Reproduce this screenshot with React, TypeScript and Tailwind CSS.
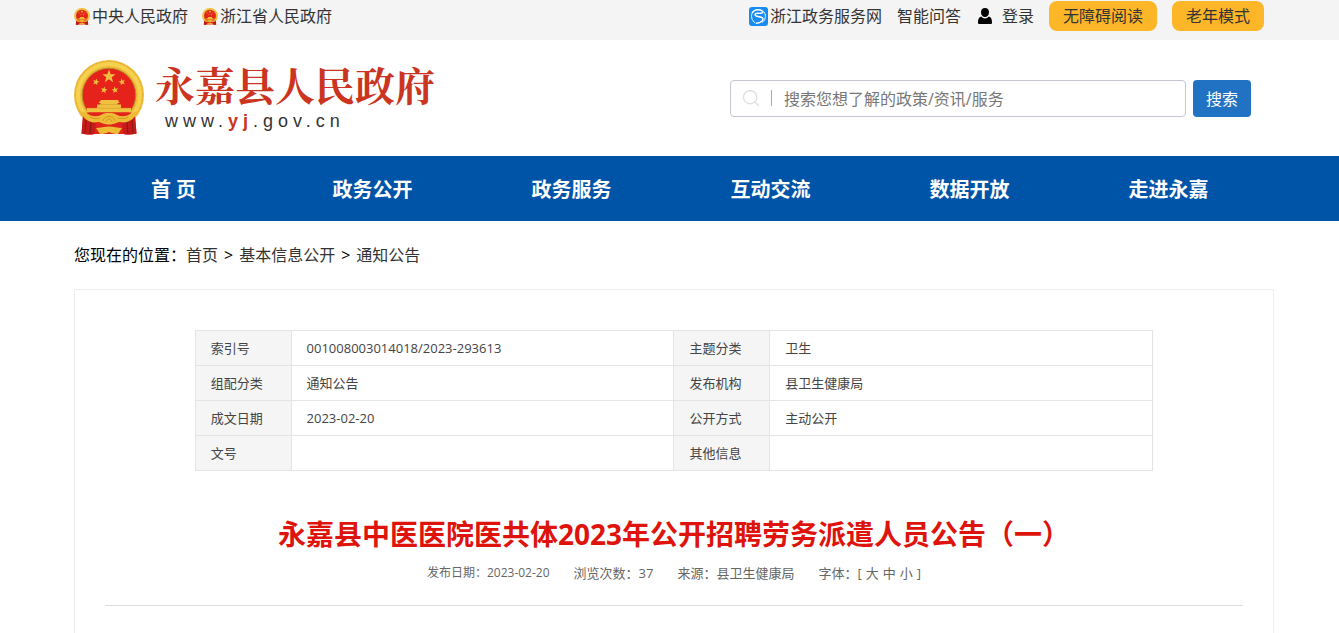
import { Search } from "lucide-react";

const navItems = ["首 页", "政务公开", "政务服务", "互动交流", "数据开放", "走进永嘉"];

const infoRows = [
  ["索引号", "001008003014018/2023-293613", "主题分类", "卫生"],
  ["组配分类", "通知公告", "发布机构", "县卫生健康局"],
  ["成文日期", "2023-02-20", "公开方式", "主动公开"],
  ["文号", "", "其他信息", ""],
];

const STAR = "M0,-10 L2.4,-3.2 L9.5,-3.1 L3.8,1.2 L5.9,8.1 L0,4 L-5.9,8.1 L-3.8,1.2 L-9.5,-3.1 L-2.4,-3.2 Z";

function Emblem({ className }: { className: string }) {
  return (
    <svg viewBox="0 0 70 76" className={className} aria-hidden="true">
      <circle cx="35" cy="35" r="35" fill="#eebb36" />
      <circle cx="35" cy="35" r="31" fill="none" stroke="#f6d150" strokeWidth="4" />
      <circle cx="35" cy="35" r="33.500" fill="none" stroke="#dfa52c" strokeWidth="0.600" strokeDasharray="2 2" />
      <circle cx="35" cy="35" r="26.800" fill="#e5231b" stroke="#b98a2c" strokeWidth="1" />
      <g fill="#f0c040">
        <path d={STAR} transform="translate(35 16.500) scale(0.7)" />
        <path d={STAR} transform="translate(22 22) rotate(15) scale(0.36)" />
        <path d={STAR} transform="translate(48 22) rotate(-15) scale(0.36)" />
        <path d={STAR} transform="translate(30 30) rotate(10) scale(0.36)" />
        <path d={STAR} transform="translate(41 30) rotate(-10) scale(0.36)" />
        <path d="M27 40h17l1.500 3h-2v1.500H47V48h10v4.500H13V48h10v-3.500h3.500V43h-2z" />
      </g>
      <path d="M25.500 44.500h19M14 48.300h42" stroke="#d69c28" strokeWidth="0.600" />
      {/* drapery and ribbon */}
      <path d="M13 52.500h44l4 4 1.500 17c-4 1-9 1.500-13 .5H20.500c-4 1-9 .5-13-.5l1.500-17z" fill="#e0241d" />
      <path d="M9 56l-1.500 17.500c4 1 9 1.500 13 .5L22 62zM61 56l1.500 17.500c-4 1-9 1.500-13 .5L48 62z" fill="#c41c1a" />
      <path d="M12 60l-1 13M17 62l-1 12M58 60l1 13M53 62l1 12" stroke="#8f1515" strokeWidth="1" />
      <path d="M6 51l6 1.500c5 4 10 5 15 2.500 2-1.500 4-2 8-2s6 .5 8 2c5 2.500 10 1.500 15-2.500l6-1.500c-3 8-10 13-18 11-3 0-5 2.500-11 2.500S27 62 24 62C16 64 9 59 6 51z" fill="#eebb36" />
      <path d="M22 68c5 0 8-1.500 13-1.500S43 68 48 68l-4 6c-3 0-6-.5-9-2-3 1.500-6 2-9 2z" fill="#eebb36" />
      <path d="M29 61c1-6 11-6 12 0M32 62c1-4 5-4 6 0M16 57c3 2 7 2 10 1M54 57c-3 2-7 2-10 1" fill="none" stroke="#cf8d19" strokeWidth="0.800" />
    </svg>
  );
}

function ServiceLogo() {
  return (
    <svg viewBox="0 0 19 19" className="h-[19px] w-[19px]" aria-hidden="true">
      <rect width="19" height="19" rx="3" fill="#168cf2" />
      <g fill="none" stroke="#fff" strokeLinecap="round">
        <path d="M3.400 5.500C1.600 9 2.500 13.500 6 15.800" strokeWidth="0.900" />
        <path d="M3.400 5.500C5.500 2.500 10 1.800 13.500 4c1.800 1.600-1.500 2.600-4 2.300C6.500 6 5.500 7.200 6.500 8.500c1.500 1.800 5.500.8 7 2.500 1.600 2-1.500 4.800-6 5.200" strokeWidth="1.400" />
        <path d="M15.500 5.500c1.800 3.500 1 7.500-2 9.800" strokeWidth="0.900" />
      </g>
    </svg>
  );
}

function TopBar() {
  return (
    <div className="h-10 bg-[#f4f4f4] pl-[9px]">
      <div className="mx-auto flex max-w-[1200px] items-center justify-between pt-px pr-[10px] leading-[30px] text-[#333]">
        <div className="flex gap-[14px]">
          {["中央人民政府", "浙江省人民政府"].map((name) => (
            <a key={name} href="#" className="flex items-center gap-0.5">
              <Emblem className="h-[17px] w-4" />
              {name}
            </a>
          ))}
        </div>
        <div className="flex gap-[15px]">
          <a href="#" className="flex items-center gap-0.5">
            <ServiceLogo />
            浙江政务服务网
          </a>
          <a href="#">智能问答</a>
          <a href="#" className="flex items-center gap-2">
            <svg viewBox="0 0 18 16" className="h-4 w-[18px]" fill="#000" aria-hidden="true">
              <path d="M9 0C6.300 0 4.800 1.800 5 4.500 5.200 7.300 6.800 9 9 9s3.800-1.700 4-4.500C13.200 1.800 11.700 0 9 0zM5.200 8.500C2.800 9.400 2 11 2 14.500c0 1 .5 1.500 1.500 1.500h11c1 0 1.500-.5 1.500-1.500 0-3.500-.8-5.100-3.200-6C11.800 9.700 10.500 10.400 9 10.400S6.200 9.700 5.200 8.500z" />
            </svg>
            登录
          </a>
          <button type="button" className="rounded-lg bg-[#fcb628] px-[14px]">无障碍阅读</button>
          <button type="button" className="rounded-lg bg-[#fcb628] px-[14px]">老年模式</button>
        </div>
      </div>
    </div>
  );
}

function Header() {
  return (
    <header className="pl-[9px]">
      <div className="mx-auto flex h-[116px] max-w-[1200px] items-center justify-between pr-[23px]">
        <a href="#" className="flex items-center gap-[11px]">
          <Emblem className="h-[76px] w-[70px]" />
          <span className="flex flex-col">
            <span className="font-['Liberation_Serif','Noto_Serif_CJK_SC','Noto_Sans_CJK_SC',serif] text-[40px] leading-[46px] font-bold text-[#cb3420]">
              永嘉县人民政府
            </span>
            <span className="pl-[10px] font-['Liberation_Sans',sans-serif] text-lg leading-5 tracking-[5px] text-[#333]">
              www.<b className="text-[#cb3420]">yj</b>.gov.cn
            </span>
          </span>
        </a>
        <form className="flex gap-[7px]" onSubmit={(e) => e.preventDefault()}>
          <div className="flex h-[37px] w-[456px] items-center rounded border border-[#c5c5cf] pl-[10px]">
            <Search className="h-5 w-5 text-[#ddd]" strokeWidth={1.5} />
            <span className="ml-[10px] h-4 w-px bg-[#aaa]" />
            <input
              type="text"
              aria-label="搜索"
              placeholder="搜索您想了解的政策/资讯/服务"
              className="min-w-0 flex-1 px-3 pt-0.5 outline-none placeholder:text-[#777]"
            />
          </div>
          <button type="submit" className="w-[58px] rounded bg-[#2272c3] pt-0.5 text-white">搜索</button>
        </form>
      </div>
    </header>
  );
}

function InfoTable() {
  return (
    <table className="mx-auto w-4/5 table-fixed border-collapse text-left text-[13px] text-[#444]">
      <colgroup>
        <col className="w-[10%]" />
        <col className="w-[40%]" />
        <col className="w-[10%]" />
        <col className="w-[40%]" />
      </colgroup>
      <tbody>
        {infoRows.map((row) => (
          <tr key={row[0]} className="h-[35px]">
            {row.map((cell, i) =>
              i % 2 === 0 ? (
                <th key={i} scope="row" className="border border-[#e4e4e4] bg-[#f5f5f5] px-[15px] pt-0.5 font-normal">
                  {cell}
                </th>
              ) : (
                <td key={i} className="border border-[#e4e4e4] px-[15px] pt-0.5">{cell}</td>
              )
            )}
          </tr>
        ))}
      </tbody>
    </table>
  );
}

export default function App() {
  return (
    <div className="flex min-h-screen flex-col bg-white font-['Open_Sans','Noto_Sans_CJK_SC',sans-serif] text-base" lang="zh-CN">
      <TopBar />
      <Header />

      <nav className="bg-[#0054a7] pl-[9px]">
        <div className="mx-auto grid max-w-[1200px] grid-cols-6 pt-0.5 pr-1.5 text-center text-xl leading-[63px] font-bold text-white">
          {navItems.map((item) => (
            <a key={item} href="#">{item}</a>
          ))}
        </div>
      </nav>

      <div className="flex flex-1 flex-col pl-[9px]">
        <main className="mx-auto flex w-full max-w-[1200px] flex-1 flex-col">
          <div className="flex h-[68px] items-center text-black">
            <span>您现在的位置：</span>
            <div className="flex gap-[6px]">
              <a href="#" className="text-[#333]">首页</a>
              <span>&gt;</span>
              <a href="#" className="text-[#333]">基本信息公开</a>
              <span>&gt;</span>
              <a href="#" className="text-[#333]">通知公告</a>
            </div>
          </div>

          <article className="flex-1 border border-b-0 border-[#eee] pt-10">
            <InfoTable />
            <div className="mx-[30px] border-b border-[#ddd] pt-10 pb-5 text-center">
              <h1 className="text-[28px] leading-[46px] font-bold text-[#de140c]">
                永嘉县中医医院医共体2023年公开招聘劳务派遣人员公告（一）
              </h1>
              <div className="mt-1 flex items-center justify-center gap-6 text-[13px] leading-6 text-[#666]">
                <span className="text-xs leading-6">发布日期：2023-02-20</span>
                <span>浏览次数：37</span>
                <span>来源：县卫生健康局</span>
                <span className="flex gap-1">
                  <span>字体：[</span>
                  <button type="button">大</button>
                  <button type="button">中</button>
                  <button type="button">小</button>
                  <span>]</span>
                </span>
              </div>
            </div>
          </article>
        </main>
      </div>
    </div>
  );
}
